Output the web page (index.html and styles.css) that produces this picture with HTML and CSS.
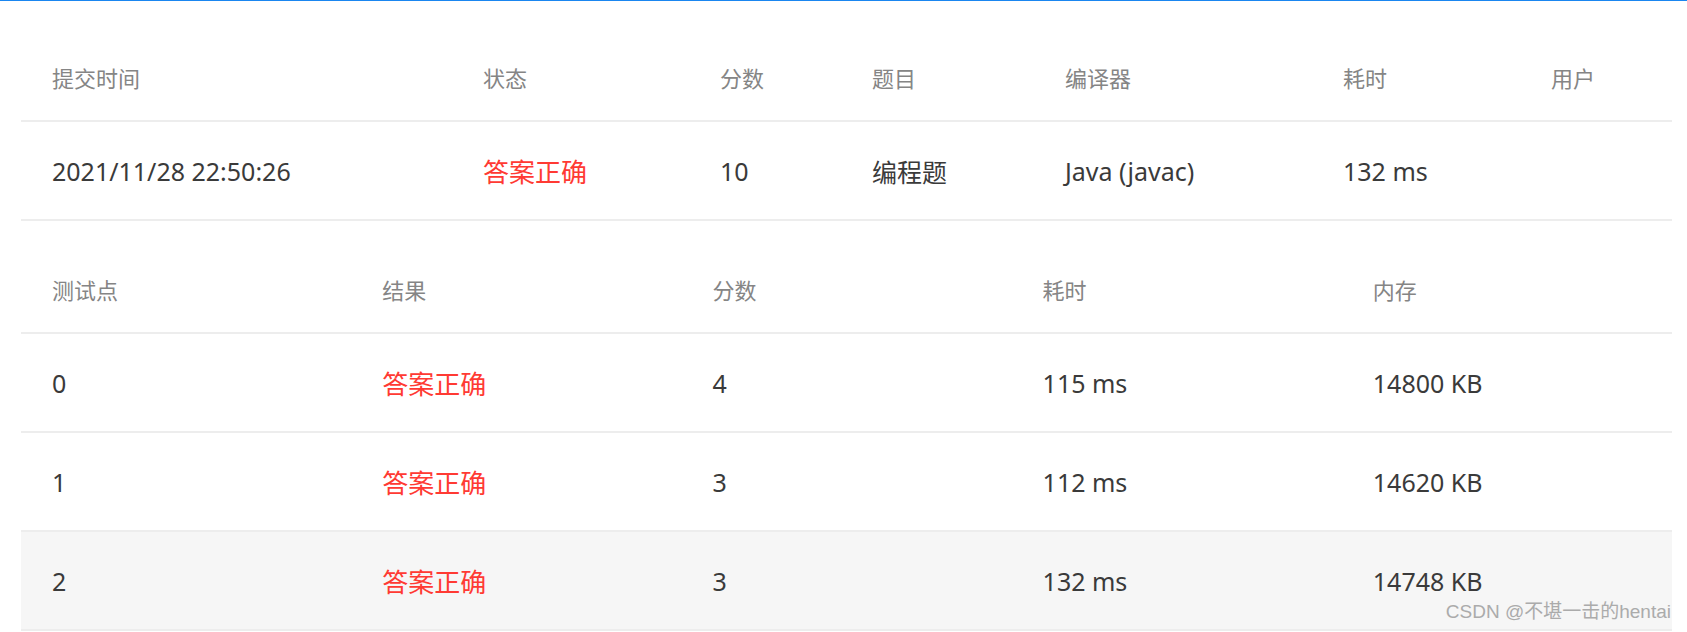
FILE: index.html
```html
<!DOCTYPE html>
<html lang="zh-CN">
<head>
<meta charset="utf-8">
<title>提交详情</title>
<link rel="stylesheet" href="styles.css">
</head>
<body>
<div class="topbar"></div>
<main class="page">
  <section class="table t-submit">
    <div class="row head">
      <div class="cell">提交时间</div>
      <div class="cell">状态</div>
      <div class="cell">分数</div>
      <div class="cell">题目</div>
      <div class="cell">编译器</div>
      <div class="cell">耗时</div>
      <div class="cell">用户</div>
    </div>
    <div class="row data">
      <div class="cell">2021/11/28 22:50:26</div>
      <div class="cell ok">答案正确</div>
      <div class="cell">10</div>
      <div class="cell">编程题</div>
      <div class="cell">Java (javac)</div>
      <div class="cell">132 ms</div>
      <div class="cell"></div>
    </div>
  </section>

  <section class="table t-cases">
    <div class="row head">
      <div class="cell">测试点</div>
      <div class="cell">结果</div>
      <div class="cell">分数</div>
      <div class="cell">耗时</div>
      <div class="cell">内存</div>
    </div>
    <div class="row data">
      <div class="cell">0</div>
      <div class="cell ok">答案正确</div>
      <div class="cell">4</div>
      <div class="cell">115 ms</div>
      <div class="cell">14800 KB</div>
    </div>
    <div class="row data">
      <div class="cell">1</div>
      <div class="cell ok">答案正确</div>
      <div class="cell">3</div>
      <div class="cell">112 ms</div>
      <div class="cell">14620 KB</div>
    </div>
    <div class="row data hover">
      <div class="cell">2</div>
      <div class="cell ok">答案正确</div>
      <div class="cell">3</div>
      <div class="cell">132 ms</div>
      <div class="cell">14748 KB</div>
    </div>
  </section>
</main>
<div class="watermark">CSDN @不堪一击的hentai</div>
</body>
</html>
```

FILE: styles.css
```css
html, body {
  margin: 0;
  padding: 0;
  background: #ffffff;
}

body {
  font-family: "Noto Sans", "Noto Sans CJK SC", sans-serif;
  color: #333333;
  position: relative;
  width: 1687px;
  height: 632px;
  overflow: hidden;
}

.topbar {
  height: 1px;
  background: #1a86f0;
}

.page {
  padding: 33px 15px 0 21px;
  display: flex;
  flex-direction: column;
  gap: 25px;
}

.table {
  display: flex;
  flex-direction: column;
}

.row {
  display: grid;
  align-items: center;
  border-bottom: 2px solid #ededed;
}

.t-submit .row {
  grid-template-columns: 431px 237px 152px 193px 278px 208px 152px;
}

.t-cases .row {
  grid-template-columns: repeat(5, 1fr);
}

.cell {
  padding-left: 31px;
  white-space: nowrap;
}

.head {
  height: 86px;
  font-size: 22px;
  color: #858585;
}

.data {
  height: 97px;
  font-size: 25px;
  color: #3a3a3a;
}

.data .cell {
  padding-top: 0;
}

.ok {
  color: #ff3a33;
  font-size: 26px;
}

.hover {
  background: #f6f6f6;
}

.watermark {
  position: absolute;
  right: 16px;
  bottom: 10px;
  font-family: "Liberation Sans", "Noto Sans CJK SC", sans-serif;
  font-size: 19px;
  color: #ababab;
  line-height: 20px;
}
```
